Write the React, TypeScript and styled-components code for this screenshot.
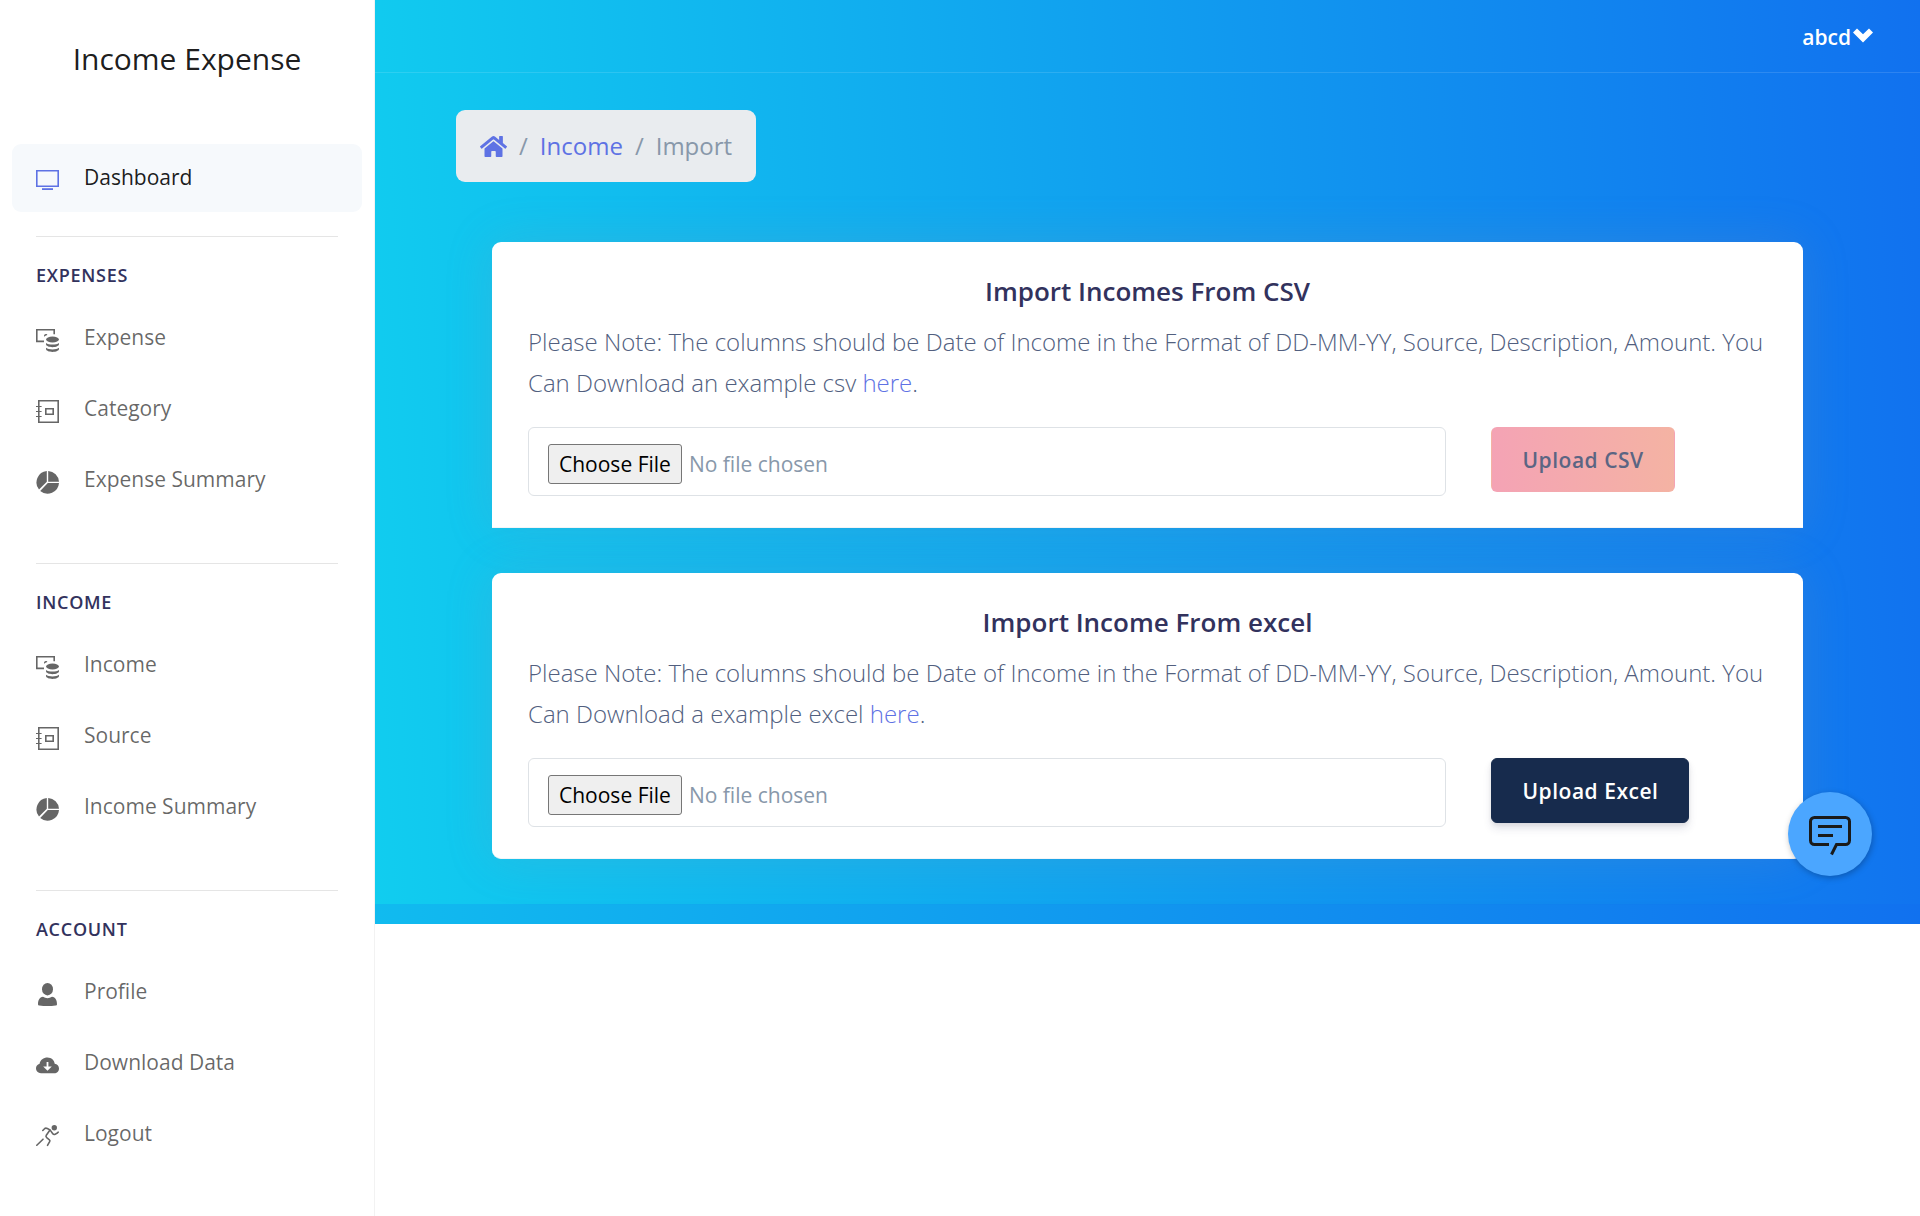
import React from "react";
import styled, { createGlobalStyle } from "styled-components";
import { FaHome } from "react-icons/fa";

const GlobalStyle = createGlobalStyle`
  *, *::before, *::after { box-sizing: border-box; }
  body {
    margin: 0;
    background: #fff;
    color: #525f7f;
    font-family: "Open Sans", "Noto Sans", sans-serif;
    font-size: 24px;
    font-weight: 400;
  }
  a { text-decoration: none; }
`;

const Page = styled.div`
  display: flex;
  min-height: 100vh;
`;

const Sidebar = styled.nav`
  flex: none;
  width: 375px;
  border-right: 1px solid #f2f2f2;
  background: #fff;
`;

const Brand = styled.a`
  display: block;
  padding: 39px 0 33px;
  margin-bottom: 32px;
  color: rgba(0, 0, 0, 0.9);
  font-size: 30px;
  line-height: 40px;
  text-align: center;
`;

const NavList = styled.ul`
  display: grid;
  gap: 3px;
  margin: 0;
  padding: 0 12px;
  list-style: none;
`;

const NavLink = styled.a<{ $active?: boolean }>`
  display: flex;
  align-items: center;
  height: 68px;
  padding: 0 24px 2px;
  border-radius: 9px;
  background: ${(p) => (p.$active ? "#f6f9fc" : "transparent")};
  color: ${(p) => (p.$active ? "rgba(0, 0, 0, 0.9)" : "rgba(0, 0, 0, 0.6)")};
  font-size: 21px;
  line-height: 32px;
`;

const NavIcon = styled.svg<{ $tint?: string }>`
  flex: none;
  width: 23px;
  height: 29px;
  margin-right: 25px;
  padding-top: 6px;
  color: ${(p) => p.$tint ?? "#666"};
`;

const NavSection = styled.section`
  padding-bottom: 25px;
`;

const Divider = styled.hr`
  height: 1px;
  margin: 24px 36px;
  border: 0;
  background: #e5e5e5;
`;

const NavHeading = styled.h6`
  margin: 0 0 15px;
  padding: 1px 36px 0;
  color: #32325d;
  font-size: 18px;
  font-weight: 600;
  letter-spacing: 0.04em;
  line-height: 27px;
  text-transform: uppercase;
`;

const Main = styled.div`
  flex: 1;
  min-width: 0;
`;

const Hero = styled.div`
  position: relative;
`;

const HeroBody = styled.div`
  padding-bottom: 45px;
  background: linear-gradient(87deg, #11cdef 0, #1171ef 100%);
`;

const HeroStrip = styled.div`
  height: 20px;
  background: linear-gradient(87deg, #11cdef -375px, #1171ef 100%);
`;

const Topbar = styled.header`
  display: flex;
  justify-content: flex-end;
  padding: 21px 47px 19px;
  border-bottom: 1px solid rgba(255, 255, 255, 0.12);
`;

const UserMenu = styled.button`
  display: flex;
  align-items: center;
  gap: 2px;
  padding: 0;
  border: 0;
  background: none;
  color: #fff;
  font: 600 21px/32px "Open Sans", "Noto Sans", sans-serif;
  cursor: pointer;
`;

const Content = styled.main`
  padding: 37px 81px 0;
`;

const Breadcrumb = styled.ol`
  display: inline-flex;
  align-items: center;
  margin: 0 0 60px;
  padding: 18px 24px;
  border-radius: 9px;
  background: #e9ecef;
  color: #8898aa;
  line-height: 36px;
  list-style: none;
  vertical-align: top;
`;

const Crumb = styled.li`
  display: flex;
  align-items: center;

  & + &::before {
    content: "/";
    padding: 0 12px;
  }

  a {
    display: flex;
    color: #5e72e4;
  }
`;

const Cards = styled.div`
  display: grid;
  gap: 45px;
  padding: 0 36px;
`;

const Card = styled.section<{ $openBottom?: boolean }>`
  padding: 31px 36px;
  border-bottom: 1px solid #f4f5f7;
  border-radius: ${(p) => (p.$openBottom ? "9px 9px 0 0" : "9px")};
  background: #fff;
  box-shadow: 0 0 48px rgba(136, 152, 170, 0.2);
`;

const CardTitle = styled.h4`
  margin: 0 0 12px;
  color: #32325d;
  font-size: 26px;
  font-weight: 600;
  line-height: 36px;
  text-align: center;
`;

const Note = styled.p`
  margin: 0 0 24px;
  font-weight: 300;
  line-height: 41px;

  a { color: #5e72e4; }
`;

const UploadForm = styled.form`
  display: grid;
  grid-template-columns: 10fr 3fr;
  gap: 45px;
  align-items: start;
  justify-items: start;
`;

const FileInput = styled.input`
  width: 100%;
  height: 69px;
  padding: 16px 19px 12px;
  border: 1px solid #dee2e6;
  border-radius: 6px;
  background: #fff;
  color: #8898aa;
  font: 400 21px/32px "Open Sans", "Noto Sans", sans-serif;

  &::file-selector-button {
    margin-right: 7px;
    height: 40px;
    padding: 1px 10px;
    border: 1px solid #767676;
    border-radius: 3px;
    background: #efefef;
    color: #000;
    font: inherit;
  }
`;

const UploadButton = styled.button`
  height: 65px;
  padding: 0 30px;
  border: 1px solid #172b4d;
  border-radius: 6px;
  background: #172b4d;
  box-shadow: 0 6px 9px rgba(50, 50, 93, 0.11), 0 2px 4px rgba(0, 0, 0, 0.08);
  color: #fff;
  font: 600 21px/32px "Open Sans", "Noto Sans", sans-serif;
  letter-spacing: 0.025em;
  cursor: pointer;

  &:disabled {
    border-color: transparent;
    background: linear-gradient(87deg, #f4a3b5 0, #f4b3a3 100%);
    box-shadow: none;
    color: #5b6583;
    cursor: default;
  }
`;

const ChatButton = styled.button`
  position: absolute;
  right: 48px;
  bottom: 48px;
  width: 84px;
  height: 84px;
  padding: 0;
  border: 0;
  border-radius: 50%;
  background: #4ba6ff;
  box-shadow: 1px 2px 6px rgba(0, 0, 0, 0.25);
  cursor: pointer;
`;

const shapes = {
  tv: (
    <>
      <path d="M.8 1.8h21.4v15.4H.8z" fill="none" stroke="currentColor" strokeWidth="1.6" />
      <path d="M6 19.2h11v1.8H6z" fill="currentColor" />
    </>
  ),
  coins: (
    <>
      <path d="M8 12.4H.8V.8h17.4v4.4" fill="none" stroke="currentColor" strokeWidth="1.6" />
      <path d="M8 7.8c-.3-1.8.8-3 2.3-2.7.7.1 1 .5 1 .9L9.5 6.800z" fill="currentColor" />
      <ellipse cx="16.5" cy="10.5" rx="6.5" ry="2.9" fill="currentColor" />
      <path
        d="M10 14c1.3 1 3.800 1.600 6.500 1.600S21.700 15 23 14v1.300c0 1.600-2.900 2.900-6.500 2.900S10 16.900 10 15.300zM10 18.800c1.300 1 3.800 1.600 6.500 1.600s5.200-.6 6.500-1.600v1.300c0 1.600-2.900 2.900-6.500 2.900S10 21.700 10 20.100z"
        fill="currentColor"
      />
    </>
  ),
  album: (
    <g fill="none" stroke="currentColor" strokeWidth="1.6">
      <path d="M2.800.8h19.400v21.400H2.800z" />
      <path d="M9.800 8.800h7.400v5.400H9.800z" />
      <path d="M0 6.500h5.600M0 11.500h5.600M0 16.500h5.600" strokeWidth="1.2" />
    </g>
  ),
  pie: (
    <path
      d="M10.800 0v10.700L3 18.600A11.500 11.500 0 0 1 10.800 0zM12.200 0A11.500 11.500 0 0 1 23 10.700H12.200zM23 12.100A11.500 11.500 0 0 1 4.200 20.100L11.800 12.100z"
      fill="currentColor"
    />
  ),
  person: (
    <>
      <ellipse cx="11.5" cy="6.2" rx="5.5" ry="6.2" fill="currentColor" />
      <path
        d="M7 13.800c2.700 1.800 6.300 1.800 9 0 3.500.6 5 3.500 5 7.400 0 1-.6 1.200-1.500 1.400-4.500.7-11.500.7-16 0C2.600 22.400 2 22.200 2 21.200c0-3.900 1.500-6.800 5-7.400z"
        fill="currentColor"
      />
    </>
  ),
  cloud: (
    <path
      fillRule="evenodd"
      d="M11.500 3.500c3.900 0 6.800 2.800 7.200 6.300 2.500.4 4.300 2.200 4.300 4.600 0 2.700-2 4.800-4.800 4.800H5c-2.900 0-5-2.100-5-4.900 0-2.200 1.400-4 3.600-4.600C4.200 6 7.500 3.500 11.500 3.500zM10.600 8v4.500H7.200l4.300 4.300 4.300-4.300h-3.400V8z"
      fill="currentColor"
    />
  ),
  runner: (
    <>
      <circle cx="18.300" cy="2.800" r="2.700" fill="currentColor" />
      <g fill="none" stroke="currentColor" strokeWidth="1.600" strokeLinecap="round" strokeLinejoin="round">
        <path d="M6.800 5.500l2-2c.8-.6 1.600-.4 2.500 0l2.700 1.400 2.800 3.800c.6.8 1.500.9 2.400.5 1.300-.5 2.500-1 3-2" />
        <path d="M13.800 5.200l-3.500 5c-.6 1-.4 1.800.4 2.500l2.700 2.200c.7.600.7 1.300.1 2l-2 3.500" />
        <path d="M7 14.200L.8 20.200" />
      </g>
    </>
  ),
};

type NavEntry = { label: string; icon: keyof typeof shapes };

const sections: { title: string; entries: NavEntry[] }[] = [
  {
    title: "Expenses",
    entries: [
      { label: "Expense", icon: "coins" },
      { label: "Category", icon: "album" },
      { label: "Expense Summary", icon: "pie" },
    ],
  },
  {
    title: "Income",
    entries: [
      { label: "Income", icon: "coins" },
      { label: "Source", icon: "album" },
      { label: "Income Summary", icon: "pie" },
    ],
  },
  {
    title: "Account",
    entries: [
      { label: "Profile", icon: "person" },
      { label: "Download Data", icon: "cloud" },
      { label: "Logout", icon: "runner" },
    ],
  },
];

function NavItem({ label, icon, active }: NavEntry & { active?: boolean }) {
  return (
    <li>
      <NavLink href="#" $active={active} aria-current={active ? "page" : undefined}>
        <NavIcon viewBox="0 0 23 23" $tint={active ? "#5e72e4" : undefined} aria-hidden="true">
          {shapes[icon]}
        </NavIcon>
        {label}
      </NavLink>
    </li>
  );
}

type ImportCardProps = {
  title: string;
  example: string;
  action: string;
  accept: string;
  disabled?: boolean;
};

const columnsNote =
  "Please Note: The columns should be Date of Income in the Format of DD-MM-YY, Source, Description, Amount.";

function ImportCard({ title, example, action, accept, disabled }: ImportCardProps) {
  return (
    <Card $openBottom={disabled}>
      <CardTitle>{title}</CardTitle>
      <Note>
        {`${columnsNote} You Can Download ${example} `}
        <a href="#">here</a>.
      </Note>
      <UploadForm onSubmit={(e) => e.preventDefault()}>
        <FileInput type="file" accept={accept} aria-label={title} />
        <UploadButton type="submit" disabled={disabled}>
          {action}
        </UploadButton>
      </UploadForm>
    </Card>
  );
}

export default function App() {
  return (
    <>
      <GlobalStyle />
      <Page>
        <Sidebar aria-label="Main">
          <Brand href="#">Income Expense</Brand>
          <NavList>
            <NavItem label="Dashboard" icon="tv" active />
          </NavList>
          {sections.map((section) => (
            <NavSection key={section.title}>
              <Divider />
              <NavHeading>{section.title}</NavHeading>
              <NavList>
                {section.entries.map((entry) => (
                  <NavItem key={entry.label} {...entry} />
                ))}
              </NavList>
            </NavSection>
          ))}
        </Sidebar>
        <Main>
          <Hero>
            <HeroBody>
              <Topbar>
                <UserMenu type="button" aria-haspopup="menu">
                  abcd
                  <svg width="20" height="18" viewBox="0 0 20 18" aria-hidden="true">
                    <path d="M0 4.500L4 .5l6 5.800L16 .5l4 4-10 10z" fill="currentColor" />
                  </svg>
                </UserMenu>
              </Topbar>
              <Content>
                <Breadcrumb aria-label="Breadcrumb">
                  <Crumb>
                    <a href="#" aria-label="Home">
                      <FaHome size={27} />
                    </a>
                  </Crumb>
                  <Crumb>
                    <a href="#">Income</a>
                  </Crumb>
                  <Crumb aria-current="page">Import</Crumb>
                </Breadcrumb>
                <Cards>
                  <ImportCard
                    title="Import Incomes From CSV"
                    example="an example csv"
                    action="Upload CSV"
                    accept=".csv"
                    disabled
                  />
                  <ImportCard
                    title="Import Income From excel"
                    example="a example excel"
                    action="Upload Excel"
                    accept=".xls,.xlsx"
                  />
                </Cards>
              </Content>
            </HeroBody>
            <HeroStrip />
            <ChatButton type="button" aria-label="Open chat">
              <svg width="84" height="84" viewBox="0 0 84 84" fill="none" stroke="#1a1a1a" strokeWidth="3" aria-hidden="true">
                <path d="M41 52.500H26.500a4 4 0 0 1-4-4v-19a4 4 0 0 1 4-4h31a4 4 0 0 1 4 4v19a4 4 0 0 1-4 4h-9L43.500 62.500" />
                <path d="M30 34.500h24M30 43.500h15" />
              </svg>
            </ChatButton>
          </Hero>
        </Main>
      </Page>
    </>
  );
}
